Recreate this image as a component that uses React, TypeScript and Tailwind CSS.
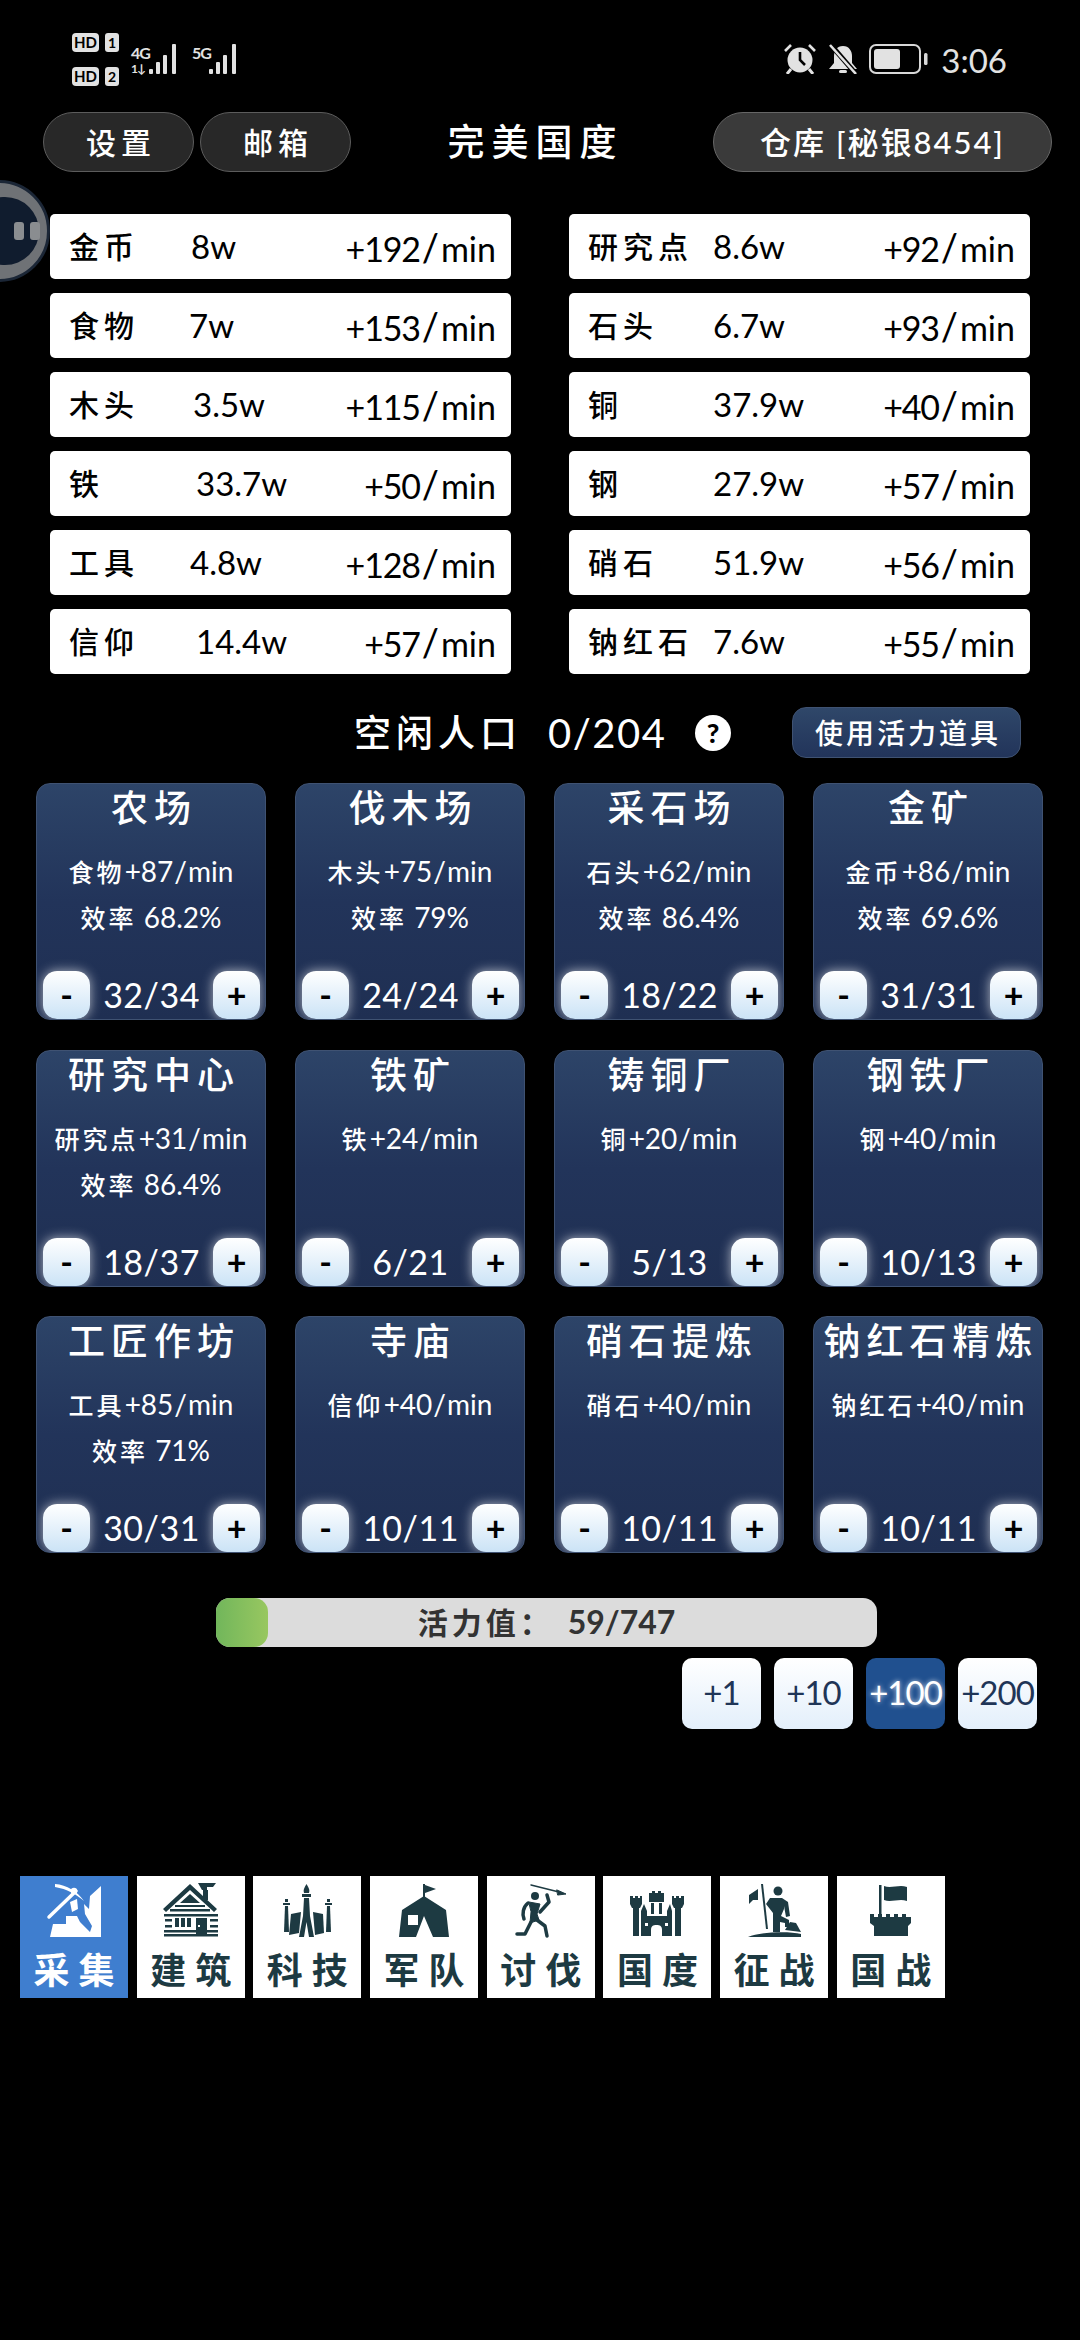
import { ReactNode } from "react";

const FONT = "font-['Lato','Noto_Sans_CJK_SC',sans-serif]";
const INK = "#1d3a42";

const resources = [
  { name: "金币", value: "8w", rate: "+192/min", labelW: "w-[122px]" },
  { name: "研究点", value: "8.6w", rate: "+92/min", labelW: "w-[125px]" },
  { name: "食物", value: "7w", rate: "+153/min", labelW: "w-[120px]" },
  { name: "石头", value: "6.7w", rate: "+93/min", labelW: "w-[125px]" },
  { name: "木头", value: "3.5w", rate: "+115/min", labelW: "w-[124px]" },
  { name: "铜", value: "37.9w", rate: "+40/min", labelW: "w-[125px]" },
  { name: "铁", value: "33.7w", rate: "+50/min", labelW: "w-[127px]" },
  { name: "钢", value: "27.9w", rate: "+57/min", labelW: "w-[125px]" },
  { name: "工具", value: "4.8w", rate: "+128/min", labelW: "w-[121px]" },
  { name: "硝石", value: "51.9w", rate: "+56/min", labelW: "w-[125px]" },
  { name: "信仰", value: "14.4w", rate: "+57/min", labelW: "w-[127px]" },
  { name: "钠红石", value: "7.6w", rate: "+55/min", labelW: "w-[125px]" },
];

const buildings = [
  { name: "农场", output: "食物", rate: "+87/min", eff: "68.2%", count: "32/34" },
  { name: "伐木场", output: "木头", rate: "+75/min", eff: "79%", count: "24/24" },
  { name: "采石场", output: "石头", rate: "+62/min", eff: "86.4%", count: "18/22" },
  { name: "金矿", output: "金币", rate: "+86/min", eff: "69.6%", count: "31/31" },
  { name: "研究中心", output: "研究点", rate: "+31/min", eff: "86.4%", count: "18/37" },
  { name: "铁矿", output: "铁", rate: "+24/min", count: "6/21" },
  { name: "铸铜厂", output: "铜", rate: "+20/min", count: "5/13" },
  { name: "钢铁厂", output: "钢", rate: "+40/min", count: "10/13" },
  { name: "工匠作坊", output: "工具", rate: "+85/min", eff: "71%", count: "30/31" },
  { name: "寺庙", output: "信仰", rate: "+40/min", count: "10/11" },
  { name: "硝石提炼", output: "硝石", rate: "+40/min", count: "10/11" },
  { name: "钠红石精炼", output: "钠红石", rate: "+40/min", count: "10/11" },
];

function MineIcon() {
  return (
    <g fill="#fff">
      <path d="M30 61 L33 48 H46 V40 H57 L60 46 L70 56 L72 50 L65 38 L64 28 L69 33 L70 20 L81 10 V61Z" />
      <path d="M29 41 L56 15" stroke="#fff" strokeWidth="3.5" fill="none" strokeLinecap="round" />
      <path d="M35 8 C47 9 57 15 64 25 C56 18 47 13 35 11Z" />
      <circle cx="54" cy="15" r="3.2" />
      <path d="M50 26 L57 23 L58 33 L52 36Z" />
    </g>
  );
}

function CabinIcon() {
  return (
    <g fill={INK}>
      <path d="M61 7 H79 L76 11 H70 V14 H65Z" />
      <rect x="66" y="14" width="5" height="10" />
      <path d="M53 8 L80 33 L77 36 L53 14 L29 36 L26 33Z" />
      <path d="M53 18 L63 27 H43Z" />
      <rect x="38" y="29" width="30" height="2" />
      <rect x="33" y="33" width="40" height="2.5" />
      <rect x="27" y="38" width="54" height="2.5" />
      <rect x="28" y="43" width="7" height="2.5" />
      <rect x="28" y="49" width="7" height="2.5" />
      <rect x="73" y="43" width="8" height="2.5" />
      <rect x="73" y="49" width="8" height="2.5" />
      <rect x="27" y="54" width="54" height="2.5" />
      <rect x="27" y="58" width="54" height="2.5" />
      <rect x="38" y="42" width="4" height="9" />
      <rect x="44" y="42" width="4" height="9" />
      <rect x="50" y="42" width="4" height="9" />
      <rect x="59" y="42" width="11" height="18" />
      <rect x="61" y="49" width="2" height="2" fill="#fff" />
    </g>
  );
}

function SpireIcon() {
  return (
    <g fill={INK}>
      <path d="M53.5 8 C56 12 57 14 56 17 H51 C50 14 51 12 53.5 8Z" />
      <rect x="49" y="18" width="9" height="3" />
      <path d="M51 22 H56 L57 40 L61 61 H56 L53.5 46 L51 61 H46 L50 40Z" />
      <path d="M30 27 H37 V29 H30Z M32 23 H35 V26 H32Z" />
      <path d="M72 27 H79 V29 H72Z M74 23 H77 V26 H74Z" />
      <path d="M32 30 H35 L36 56 H31Z" />
      <path d="M74 30 H77 L78 56 H73Z" />
      <path d="M38 38 L48 36 L46 57 L36 59Z" />
      <path d="M60 36 L70 38 L71 57 L62 59Z" />
    </g>
  );
}

function TentIcon() {
  return (
    <g fill={INK}>
      <rect x="53" y="8" width="2" height="13" />
      <path d="M55 9 L66 13 L55 17Z" />
      <path d="M54 20 L76 34 L79 61 H63 L54 40 L46 61 H29 L32 34Z" />
      <rect x="38" y="39" width="10" height="10" fill="#fff" />
    </g>
  );
}

function WarriorIcon() {
  return (
    <g fill={INK} stroke={INK} strokeLinecap="round" strokeLinejoin="round">
      <path d="M44 9 L72 16" strokeWidth="1.5" fill="none" />
      <path d="M70 14 L79 18 L71 19Z" strokeWidth="1" />
      <circle cx="48" cy="20" r="4" stroke="none" />
      <path d="M41 27 C36 31 35 38 37 43" strokeWidth="3.5" fill="none" />
      <path d="M60 19 L62 26 L53 36" strokeWidth="3.5" fill="none" />
      <path d="M42 26 L53 28 L50 38 L52 44 L43 47 L44 36Z" strokeWidth="1" />
      <path d="M44 46 L38 58 L30 58" strokeWidth="3.5" fill="none" />
      <path d="M50 44 L58 50 L60 60" strokeWidth="3.5" fill="none" />
    </g>
  );
}

function CastleIcon() {
  return (
    <g fill={INK}>
      <path d="M27 20 H30 V22 H32 V20 H35 V22 H37 V20 H39 V28 L37 32 H29 L27 28Z" />
      <path d="M69 20 H71 V22 H73 V20 H76 V22 H78 V20 H81 V28 L79 32 H71 L69 28Z" />
      <rect x="30" y="32" width="6" height="28" />
      <rect x="72" y="32" width="6" height="28" />
      <path d="M46 17 H49 V15 H52 V17 H55 V15 H58 V17 H61 V26 H46Z" />
      <path d="M38 35 L41 28 L44 35 V40 H64 V35 L67 28 L69 35 V60 H38Z" />
      <rect x="48" y="27" width="3" height="11" />
      <rect x="56" y="27" width="3" height="11" />
      <path d="M48 60 V54 C48 50 50 49 53.5 49 C57 49 59 50 59 54 V60Z" fill="#fff" />
      <rect x="42" y="47" width="3" height="3" fill="#fff" />
      <rect x="62" y="47" width="3" height="3" fill="#fff" />
    </g>
  );
}

function HeroIcon() {
  return (
    <g fill={INK}>
      <path d="M41 8 L43 8 L48 53 L46 53Z" />
      <path d="M38 13 L29 19 L29 28 L33 24 L38 24Z" />
      <circle cx="58" cy="15" r="4.5" />
      <path d="M50 22 H62 L68 26 L70 40 L66 41 L64 30 V33 L61 40 L69 44 L69 51 H65 V47 L60 46 V56 H53 V37 L46 28Z" />
      <path d="M65 54 L70 46 L76 47 L81 56Z" />
      <path d="M28 61 C40 56 68 55 81 58 V61Z" />
    </g>
  );
}

function FortIcon() {
  return (
    <g fill={INK}>
      <rect x="42" y="9" width="2.5" height="29" />
      <path d="M47 10 C54 13 62 8 70 11 V25 C62 22 54 27 47 24Z" />
      <path d="M33 38 H37 V41 H41 V38 H45 V41 H49 V38 H53 V41 H57 V38 H61 V41 H65 V38 H69 V41 H74 V47 L71 50 V60 H37 V50 L33 47Z" />
    </g>
  );
}

const tabs: { label: string; icon: ReactNode; active?: boolean }[] = [
  { label: "采集", icon: <MineIcon />, active: true },
  { label: "建筑", icon: <CabinIcon /> },
  { label: "科技", icon: <SpireIcon /> },
  { label: "军队", icon: <TentIcon /> },
  { label: "讨伐", icon: <WarriorIcon /> },
  { label: "国度", icon: <CastleIcon /> },
  { label: "征战", icon: <HeroIcon /> },
  { label: "国战", icon: <FortIcon /> },
];

function SimBadge({ n }: { n: string }) {
  return (
    <div className="flex items-center gap-[6px]">
      <span className="flex h-[19px] w-[27px] items-center justify-center rounded-[4px] bg-[#e2e2e2] text-[15px] leading-none font-bold text-black">
        HD
      </span>
      <span className="flex h-[19px] w-[14px] items-center justify-center rounded-[3px] bg-[#e2e2e2] text-[14px] leading-none font-bold text-black">
        {n}
      </span>
    </div>
  );
}

function SignalBars() {
  return (
    <svg width="33" height="30" viewBox="0 0 33 30" fill="#e2e2e2">
      <rect x="1" y="25" width="4" height="5" rx="1" />
      <rect x="8" y="18" width="4" height="12" rx="1" />
      <rect x="15" y="11" width="4" height="19" rx="1" />
      <rect x="24" y="0" width="4" height="30" rx="1" />
    </svg>
  );
}

function StatusBar() {
  return (
    <div className="flex h-[112px] justify-between pr-[73px] pl-[72px]">
      <div className="flex">
        <div className="flex flex-col gap-[15px] pt-[33px]">
          <SimBadge n="1" />
          <SimBadge n="2" />
        </div>
        <div className="ml-[12px] flex items-start pt-[44px]">
          <div className="w-[17px] text-[16px] leading-[18px] font-bold tracking-[-1px] text-[#e2e2e2]">
            4G
            <div className="text-[12px] leading-[14px]">1↓</div>
          </div>
          <SignalBars />
        </div>
        <div className="ml-[11px] flex items-start pt-[44px]">
          <div className="w-[16px] text-[16px] leading-[18px] font-bold tracking-[-1px] text-[#e2e2e2]">5G</div>
          <SignalBars />
        </div>
      </div>
      <div className="flex items-start pt-[44px]">
        <svg width="34" height="30" viewBox="0 0 34 30" fill="#e2e2e2">
          <circle cx="17" cy="16" r="12.5" />
          <path d="M17 8 V16 L22 21" stroke="#000" strokeWidth="2.6" fill="none" />
          <path d="M2 7 L8 1 M32 7 L26 1" stroke="#e2e2e2" strokeWidth="2.6" />
          <path d="M8 25 L4 30 M26 25 L30 30" stroke="#e2e2e2" strokeWidth="3" />
        </svg>
        <svg className="ml-[11px]" width="30" height="30" viewBox="0 0 30 30" fill="#e2e2e2">
          <path d="M15 2 C21 2 24 7 24 12 V19 L29 25 H1 L6 19 V12 C6 7 9 2 15 2Z" />
          <rect x="11" y="26" width="8" height="3" rx="1.5" />
          <path d="M3 1 L27 29" stroke="#000" strokeWidth="5" />
          <path d="M2 1 L28 30" stroke="#e2e2e2" strokeWidth="2.6" />
        </svg>
        <svg className="ml-[11px]" width="60" height="30" viewBox="0 0 60 30">
          <rect x="1" y="1" width="50" height="28" rx="6" fill="none" stroke="#d8d8d8" strokeWidth="2" />
          <rect x="5" y="5" width="26" height="20" rx="3" fill="#e2e2e2" />
          <rect x="55" y="9" width="3.5" height="12" rx="1.5" fill="#d8d8d8" />
        </svg>
        <span className="ml-[12px] text-[33px] leading-[32px] text-[#e2e2e2]">3:06</span>
      </div>
    </div>
  );
}

function Header() {
  return (
    <div className="flex h-[60px] items-center pr-[28px] pl-[43px]">
      {["设置", "邮箱"].map((label, i) => (
        <button
          key={label}
          className={`flex h-[60px] w-[151px] items-center justify-center rounded-full border border-[#5c5c5c] bg-[#282828] pl-[5px] text-[30px] font-medium tracking-[5px] text-white ${
            i === 1 ? "ml-[6px]" : ""
          }`}
        >
          {label}
        </button>
      ))}
      <div className="flex-1 pl-[7px] text-center text-[37px] font-medium tracking-[7px] text-white">完美国度</div>
      <button className="flex h-[60px] w-[339px] items-center justify-center rounded-full border border-[#666] bg-[#3a3a3a] text-[31px] font-medium text-white">
        <span className="tracking-[2px]">仓库 [秘银8454]</span>
      </button>
    </div>
  );
}

function Rate({ rate }: { rate: string }) {
  const [num, unit] = rate.split("/");
  return (
    <span className="ml-auto flex items-baseline text-[34px] leading-none">
      <span className="tracking-[-1.2px]">{num}</span>
      <span className="mx-[2px] text-[38px] leading-none">/</span>
      {unit}
    </span>
  );
}

function ResourceGrid() {
  return (
    <div className="mt-[42px] ml-[50px] grid w-[980px] grid-cols-[461px_461px] gap-x-[58px] gap-y-[14px]">
      {resources.map((r) => (
        <div key={r.name} className="flex h-[65px] items-center rounded-[5px] bg-white pr-[15px] pl-[19px] text-black">
          <span className={`${r.labelW} text-[30px] font-medium tracking-[5px]`}>{r.name}</span>
          <span className="text-[33px] leading-none">{r.value}</span>
          <Rate rate={r.rate} />
        </div>
      ))}
    </div>
  );
}

function PopulationRow() {
  return (
    <div className="mt-[33px] flex h-[51px] items-center pl-[354px] text-white">
      <span className="w-[194px] text-[37px] font-medium tracking-[5px]">空闲人口</span>
      <span className="w-[147px] text-[40px] leading-none tracking-[1.5px]">0/204</span>
      <span className="flex h-[36px] w-[36px] items-center justify-center rounded-full bg-white text-[27px] leading-none font-black text-black">
        ?
      </span>
      <button className="ml-[61px] flex h-[51px] w-[229px] items-center justify-center rounded-[14px] border border-[#3f5272] bg-gradient-to-b from-[#2f4769] to-[#22345a] pl-[3px] text-[28px] font-medium tracking-[3px]">
        使用活力道具
      </button>
    </div>
  );
}

function StepButton({ label }: { label: string }) {
  return (
    <button className="flex h-[48px] w-[47px] items-center justify-center rounded-[14px] bg-gradient-to-b from-white to-[#cbe3f6] text-[34px] leading-none font-bold text-black shadow-[0_0_12px_rgba(255,255,255,0.65)]">
      {label}
    </button>
  );
}

function BuildingCard({ b }: { b: (typeof buildings)[number] }) {
  const [num, unit] = b.rate.split("/");
  return (
    <div className="flex h-[237px] flex-col items-center overflow-hidden rounded-[14px] border border-[#3f5272] bg-gradient-to-b from-[#2d4468] via-[#22345a] to-[#1f2f52] text-white">
      <div className="mt-[1px] h-[46px] pl-[6px] text-[37px] leading-[46px] font-medium tracking-[6px] whitespace-nowrap">{b.name}</div>
      <div className="mt-[17px] h-[46px] text-[28px] leading-[46px] whitespace-nowrap">
        <span className="text-[25px] font-medium tracking-[3px]">{b.output}</span>
        {num}
        <span className="mx-[1px]">/</span>
        {unit}
      </div>
      {b.eff && (
        <div className="h-[46px] text-[28px] leading-[46px] whitespace-nowrap">
          <span className="text-[25px] font-medium tracking-[3px]">效率</span> {b.eff}
        </div>
      )}
      <div className="mt-auto flex w-full items-center justify-between pr-[5px] pl-[6px]">
        <StepButton label="-" />
        <span className="text-[34px] leading-none tracking-[0.5px]">{b.count}</span>
        <StepButton label="+" />
      </div>
    </div>
  );
}

function EnergySection() {
  return (
    <div className="mt-[44.5px]">
      <div className="relative ml-[216px] flex h-[49px] w-[661px] items-center justify-center rounded-[14px] bg-[#dcdcdc]">
        <div className="absolute top-0 left-0 h-full w-[52px] rounded-[14px] bg-gradient-to-r from-[#71b65b] to-[#98c760]" />
        <span className="relative flex items-center text-[32px] font-bold text-[#333]">
          <span className="mr-[14px] text-[30px] tracking-[4px]">活力值：</span>59/747
        </span>
      </div>
      <div className="mt-[11px] flex justify-end gap-[13px] pr-[43px]">
        {["+1", "+10", "+100", "+200"].map((v) => (
          <button
            key={v}
            className={
              v === "+100"
                ? "flex h-[71px] w-[79px] items-center justify-center rounded-[10px] bg-[#20508f] text-[33px] tracking-[-1px] text-white [text-shadow:0_0_5px_rgba(255,255,255,0.8)]"
                : "flex h-[71px] w-[79px] items-center justify-center rounded-[10px] bg-gradient-to-b from-white to-[#e3effb] text-[33px] tracking-[-1px] text-[#1f3557]"
            }
          >
            {v}
          </button>
        ))}
      </div>
    </div>
  );
}

function TabBar() {
  return (
    <div className="mt-[147px] flex gap-[8.7px] pl-[20px]">
      {tabs.map((t) => (
        <div
          key={t.label}
          className={`flex h-[122px] w-[108px] flex-col items-center ${
            t.active ? "bg-[#3f7ecf] text-white" : "bg-white text-[#1d3a42]"
          }`}
        >
          <svg className="block" width="108" height="70" viewBox="0 0 108 70">
            {t.icon}
          </svg>
          <span className="h-[52px] pl-[9px] text-[36px] leading-[48px] font-bold tracking-[9px]">{t.label}</span>
        </div>
      ))}
    </div>
  );
}

export default function App() {
  return (
    <div className={`relative h-[2340px] w-[1080px] overflow-hidden bg-black ${FONT}`}>
      <StatusBar />
      <Header />
      <ResourceGrid />
      <PopulationRow />
      <div className="mt-[25px] ml-[36px] grid w-[1008px] grid-cols-[repeat(4,230px)] gap-x-[29px] gap-y-[29.5px]">
        {buildings.map((b) => (
          <BuildingCard key={b.name} b={b} />
        ))}
      </div>
      <EnergySection />
      <TabBar />
      {/* floating assistant ball */}
      <div className="absolute top-[180px] left-[-52px] flex h-[102px] w-[102px] items-center justify-center rounded-full border-[3px] border-[#1b2636] bg-[#6f7276]">
        <div className="ml-[10px] flex h-[68px] w-[70px] items-center justify-center gap-[6px] rounded-full bg-[#101c2e] pl-[46px]">
          <span className="h-[18px] w-[10px] shrink-0 rounded-[3px] bg-[#8a8d90]" />
          <span className="h-[18px] w-[10px] shrink-0 rounded-[3px] bg-[#8a8d90]" />
        </div>
      </div>
    </div>
  );
}
